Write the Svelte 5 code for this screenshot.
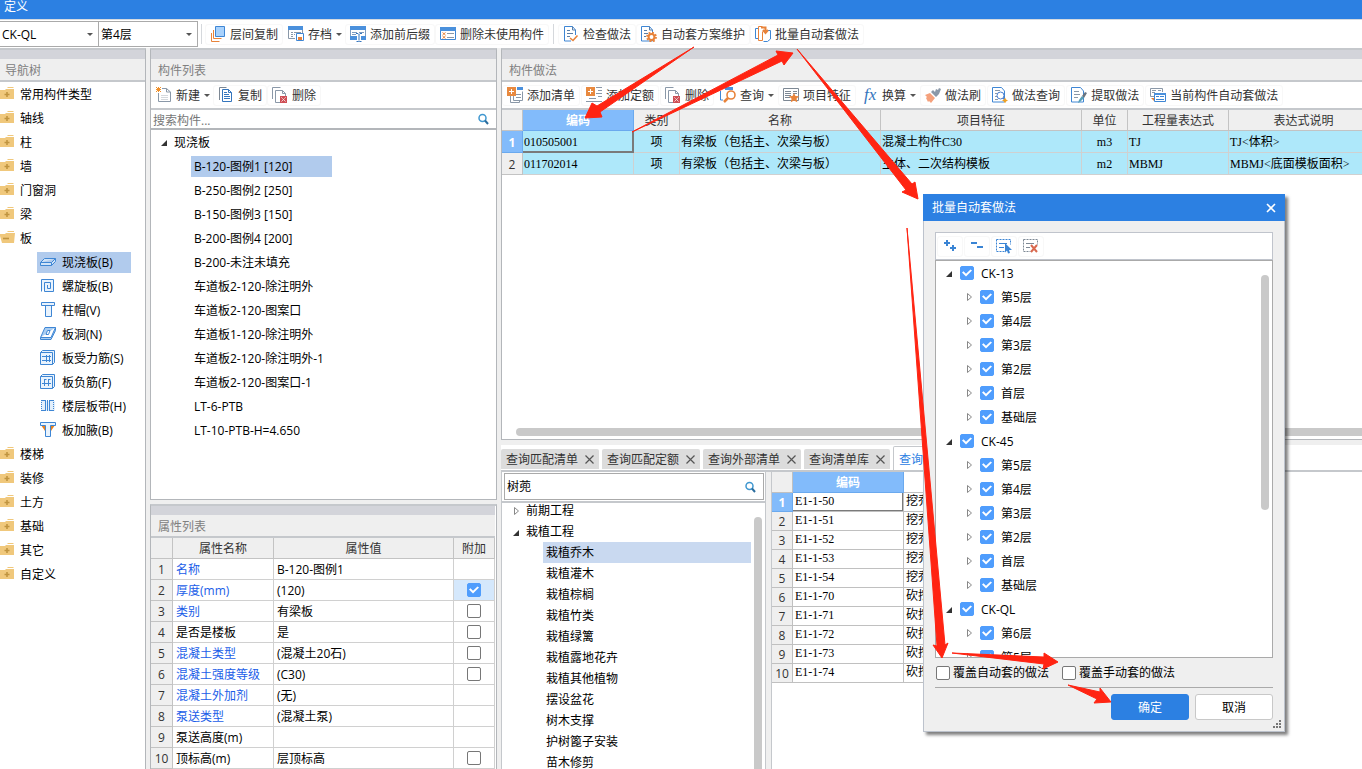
<script>
  const icons = {
    levelCopy:
      '<path fill="#a9d2fc" stroke="#3e86d4" d="M5.500.500h9v10h-9z"/><path fill="none" stroke="#e8833a" d="M3.500 4v8.500h8M1.500 7v8.500h8"/>',
    save:
      '<path fill="#4a90dc" d="M0 0h15v4H0z"/><path fill="none" stroke="#8a98a8" d="M.5 4v8.500H7M3 6.500h2m1 0h7M3 8.500h2m1 0h1M3 10.500h2M14.500 4v3"/><path fill="#fff" stroke="#3e86d4" d="M8.500 7.500h7v7h-7z"/><path fill="#e8833a" d="M10 11h4v3h-4z"/>',
    prefix:
      '<path fill="#4a90dc" d="M0 0h16v4H0z"/><path fill="none" stroke="#7d9cc0" d="M.5 4v6.500M15.500 4v6.500M2 6.500h5M9 6.500h5M2 8.500h4"/><path fill="#4a90dc" d="M0 10h7v4H0zM11 10h5v4h-5z"/><path fill="none" stroke="#3475bd" d="M6 7.500h2l1 1 1-1h2M9 8.500v6M6.500 15.500h2l.5-.5.5.5h2"/>',
    unused:
      '<path fill="#fff" stroke="#3e86d4" d="M.5 1.500h15v12H.5z"/><path fill="#4a90dc" d="M0 1h16v4H0z"/><path stroke="#e8833a" d="M2.500 6.500l3 2.500M5.500 6.500L2.500 9M2.500 10l3 2.500M5.500 10l-3 2.500"/><path stroke="#8a98a8" d="M7 7.500h7M7 11.500h7"/>',
    check:
      '<path fill="#fff" stroke="#3e86d4" d="M1.500.5h8l3 3.500v11h-11z"/><path fill="none" stroke="#5a7fa8" d="M9.500.5V4h3M4 4.500h3M4 7.500h6M4 10.500h3"/><path fill="#fff" d="M8 9h7v7H8z"/><path fill="none" stroke="#e8833a" stroke-width="1.600" d="M7 12l3 2.500 4.500-5"/>',
    plan:
      '<path fill="#fff" stroke="#3e86d4" d="M.5.500h8l3 3.500v11H.5z"/><path fill="none" stroke="#5a7fa8" d="M8.500.5V4h3M3 4.500h3M3 7.500h4M3 10.500h2"/><circle cx="10.500" cy="11" r="4.500" fill="none" stroke="#e8833a" stroke-width="1.800" stroke-dasharray="1.800 1.734"/><circle cx="10.500" cy="11" r="2.900" fill="#fff" stroke="#e8833a" stroke-width="2"/>',
    batch:
      '<path fill="none" stroke="#3e86d4" d="M3 2.500H.5v10H3M13 4.500h2.500v8.500l-3 2.500h-4"/><path fill="none" stroke="#e8833a" d="M7.500.5h-4v14h4v-9"/><path fill="none" stroke="#e8833a" stroke-width="2" d="M6 1.500h4.500V6M8 4l2.500 3L13 4"/>',
    add:
      '<path fill="none" stroke="#8a98a8" d="M3.500 9v6.500h9v-2M6.500 9v4.500h9v-9M9 7.500h5M9 10.500h5"/><path fill="#4a90dc" d="M10 0h6v3h-6z"/><path fill="#e8893f" d="M0 0h9v9H0z"/><path stroke="#fff" d="M4.500 2v5M2 4.500h5"/>',
    quota:
      '<path stroke="#8a98a8" d="M10 .5h6M12 3.500h4M10 6.500h6M12 9.500h4M3 11.500h7M0 14.500h16"/><path fill="#e8893f" d="M0 0h9v9H0z"/><path stroke="#fff" d="M4.500 2v5M2 4.500h5"/>',
    remove:
      '<path fill="#fff" stroke="#8a98a8" d="M.5 12V.500h8M3.500 3.500h7l3 3v9h-10z"/><path fill="none" stroke="#8a98a8" d="M10.500 3.500v3h3"/><path fill="#cf4f55" d="M8 9h7v7H8z"/><path stroke="#fff" stroke-dasharray="1.200 .5" d="M9.500 10.500l4 4M13.500 10.500l-4 4"/>',
    query:
      '<path fill="none" stroke="#3e86d4" d="M.5 4v9H3"/><path fill="#4a90dc" d="M5 0h8v3H5z"/><circle cx="11" cy="8" r="4" fill="#fff" stroke="#e8833a" stroke-width="1.600"/><path stroke="#e8833a" stroke-width="2.500" d="M8 11l-4 4"/>',
    feature:
      '<path fill="#fff" stroke="#7d8894" d="M.5 1.500h15v12H.5z"/><path stroke="#7d8894" d="M2 4.500h6M10 4.500h4M2 6.500h6M10 6.500h4M2 8.500h6M2 10.500h5"/><path fill="#e8833a" d="M11 6l1.500 3 3.500.3-2.500 2.400.8 3.500L11 13.400l-3.200 1.800.8-3.500L6 9.300 9.500 9z"/>',
    brush:
      '<path fill="#8a98a8" d="M14 1l2 1-2 5-3 3-5-5 2-2 2 2 1-3 2 1z"/><path fill="#f5a17c" d="M5 6l5 5-4 5-2-2-1 1-2-4 1-1-2-2z"/>',
    search:
      '<path fill="#fff" stroke="#3e86d4" d="M.5.500h9l3 3.500v11H.5z"/><path stroke="#8a98a8" d="M3 3.500h5M3 6.500h2M3 9.500h2M3 12.500h3"/><circle cx="8.500" cy="8.500" r="3.500" fill="#fff" stroke="#4a7fd0"/><path stroke="#4a7fd0" stroke-width="1.500" d="M11 11l2 2"/><path fill="#f0a020" d="M13 10.500l1 2 2 1-2 1-1 2-1-2-2-1 2-1z"/>',
    extract:
      '<path fill="#fff" stroke="#3e86d4" d="M.5.500h9l3 3.500v11H.5z"/><path stroke="#8a98a8" d="M3 4.500h5M3 7.500h6M3 10.500h4"/><path fill="#697480" d="M16 6l-2-1-3 4 2 2z"/><path fill="#58a0b8" d="M11 9l2 2-4 4-2 1 1-3z"/>',
    current:
      '<path fill="none" stroke="#8a98a8" d="M4 9.500H.5v-8h12V5M2 3.500h4M2 5.500h3M8 3.500h3"/><path fill="#e8833a" d="M1 11h3v3z"/><path fill="#fff" stroke="#3e86d4" d="M4.500 6.500h11v8h-11z"/><path stroke="#3e86d4" d="M6 9.500h3M10 9.500h4M6 12.500h8"/><path fill="#4a90dc" d="M4 6h12v2H4z"/>',
    create:
      '<path fill="#fff" stroke="#8a98a8" d="M2.500 1.500h8l4 3.500v9.500h-12z"/><path fill="none" stroke="#8a98a8" d="M10.500 1.500V5h4"/><path stroke="#d5d9dd" d="M5 8.500h7M5 10.500h7M5 12.500h7"/><path fill="#fff" d="M0 0h6v6H0z"/><path fill="#f0902a" d="M0 0h1v1H0zM2 0h1v1H2zM4 0h1v1H4zM1 1h3v3H1zM0 2h5v1H0zM0 4h1v1H0zM2 4h1v1H2zM4 4h1v1H4z"/>',
    copy:
      '<path fill="none" stroke="#7d8894" d="M1.500 13V.500h7"/><path fill="#fff" stroke="#3475bd" d="M4.500 2.500h6l3 3v9h-9z"/><path fill="none" stroke="#3475bd" d="M10.500 2.500v3h3M6 5.500h3M6 7.500h5M6 9.500h6M6 11.500h6"/>',
    slab:
      '<path fill="#cfe3f8" stroke="#3e86d4" d="M.5 8.500l4-4h11v3l-4 4H.5zM.5 8.500h11l4-4M11.500 8.500v3"/>',
    spiral:
      '<path fill="#e9f3fd" stroke="#3e86d4" d="M1.500 13.500v-12h12v12h-9v-9h6v6h-3V7"/>',
    cap:
      '<path fill="#e9f3fd" stroke="#3e86d4" d="M1.500.500h13v3h-3v11h-6v-11h-4zM5 3.500h7"/>',
    hole:
      '<path fill="#a9cdf2" stroke="#3e86d4" d="M.5 11.500L5 1.500h10.500L11 11.500zM.5 11.500v2H11l4.500-9v-3"/><path fill="#fff" stroke="#3e86d4" d="M6 8.500l1.500-4H10l-1.500 4z"/>',
    rebar:
      '<path fill="#e9f3fd" stroke="#3e86d4" d="M.5 2.500h12v12H.5zM.5 2.500l2-2h12v12l-2 2M2 6.500h9M2 10.500h9M6.500 5v7M9.500 5v7"/>',
    negative:
      '<path fill="#e9f3fd" stroke="#3e86d4" d="M.5 2.500h12v12H.5zM.5 2.500l2-2h12v12l-2 2M4.500 5v7M8.500 5v7M2 9.500h9M4.500 5.500h2M8.500 5.500h2"/>',
    strip:
      '<path fill="#e3effb" d="M1 3h14v10H1z"/><path stroke="#3e86d4" d="M1 2.500h5M9 2.500h5M1 12.500h5M9 12.500h5M5.500 3v10M9.500 3v10M7.500 2v11"/><path stroke="#3e86d4" stroke-dasharray="1 1" d="M1.500 4v8M13.500 4v8"/>',
    haunch:
      '<path fill="#e8801c" d="M1 3h14l-4 6H5z"/><path fill="#e9f3fd" stroke="#3e86d4" d="M.5.500h15v3h-5v11h-5v-11h-5z"/>',
    folder:
      '<path fill="#f0c87c" d="M8 1h5l1 1H7zM6 3h8v10H0V4h5z"/><path stroke="#c09440" stroke-width="1.600" d="M4.500 8.500h5M7 6v5"/>',
    folderOpen:
      '<path fill="#f0c87c" d="M8 1h6v1H7zM6 3h9l-1 10H2L0 6V4h5z"/><path stroke="#c09440" stroke-width="1.600" d="M3 8.500h6"/>',
    plus: '<path stroke="#3a84d4" stroke-width="2" d="M2 5h6M5 2v6M8 10h6M11 7v6"/>',
    minus: '<path stroke="#3a84d4" stroke-width="2" d="M2 5h6M8 9h6"/>',
    selectAll:
      '<path fill="none" stroke="#3a84d4" stroke-dasharray="2 1" d="M.5 1.500h14v5M.5 1.500v12h9"/><path stroke="#3a84d4" d="M3 5.500h8M3 9.500h5"/><path fill="#3a84d4" d="M9 5l7 7h-3l1 3-2 .500-1-3-2 2z"/>',
    selectNone:
      '<path fill="none" stroke="#7d8894" stroke-dasharray="2 1" d="M.5 1.500h14v5M.5 1.500v12h7"/><path stroke="#7d8894" d="M3 5.500h8M3 9.500h4"/><path stroke="#d9694f" stroke-width="2" d="M8 7l6 7M14 7l-6 7"/>',
    magnifier:
      '<circle cx="6.500" cy="7" r="3.500" fill="none" stroke="#3f97d0" stroke-width="1.500"/><path stroke="#2a6d9e" stroke-width="2" d="M9 9.500l3 3.500"/>'
  };

  const mainTools = [
    { icon: "levelCopy", text: "层间复制" },
    { icon: "save", text: "存档", menu: true },
    { icon: "prefix", text: "添加前后缀" },
    { icon: "unused", text: "删除未使用构件" },
    { separator: true },
    { icon: "check", text: "检查做法" },
    { icon: "plan", text: "自动套方案维护" },
    { icon: "batch", text: "批量自动套做法" }
  ];
  const listTools = [
    { icon: "create", text: "新建", menu: true },
    { icon: "copy", text: "复制" },
    { icon: "remove", text: "删除" }
  ];
  const methodTools = [
    { icon: "add", text: "添加清单" },
    { icon: "quota", text: "添加定额" },
    { icon: "remove", text: "删除" },
    { icon: "query", text: "查询", menu: true },
    { icon: "feature", text: "项目特征" },
    { icon: "fx", text: "换算", menu: true },
    { icon: "brush", text: "做法刷" },
    { icon: "search", text: "做法查询" },
    { icon: "extract", text: "提取做法" },
    { icon: "current", text: "当前构件自动套做法" }
  ];

  const slabTypes = [
    ["slab", "现浇板(B)"],
    ["spiral", "螺旋板(B)"],
    ["cap", "柱帽(V)"],
    ["hole", "板洞(N)"],
    ["rebar", "板受力筋(S)"],
    ["negative", "板负筋(F)"],
    ["strip", "楼层板带(H)"],
    ["haunch", "板加腋(B)"]
  ];
  const navigation = [
    "常用构件类型", "轴线", "柱", "墙", "门窗洞", "梁", "板",
    "楼梯", "装修", "土方", "基础", "其它", "自定义"
  ];

  const components = [
    "B-120-图例1 [120]",
    "B-250-图例2 [250]",
    "B-150-图例3 [150]",
    "B-200-图例4 [200]",
    "B-200-未注未填充",
    "车道板2-120-除注明外",
    "车道板2-120-图案口",
    "车道板1-120-除注明外",
    "车道板2-120-除注明外-1",
    "车道板2-120-图案口-1",
    "LT-6-PTB",
    "LT-10-PTB-H=4.650"
  ];

  let properties = $state([
    { name: "名称", value: "B-120-图例1", blue: true },
    { name: "厚度(mm)", value: "(120)", blue: true, extra: true },
    { name: "类别", value: "有梁板", blue: true, extra: false },
    { name: "是否是楼板", value: "是", extra: false },
    { name: "混凝土类型", value: "(混凝土20石)", blue: true, extra: false },
    { name: "混凝土强度等级", value: "(C30)", blue: true, extra: false },
    { name: "混凝土外加剂", value: "(无)", blue: true },
    { name: "泵送类型", value: "(混凝土泵)", blue: true },
    { name: "泵送高度(m)", value: "" },
    { name: "顶标高(m)", value: "层顶标高", extra: false }
  ]);

  const methodHeads = ["类别", "名称", "项目特征", "单位", "工程量表达式", "表达式说明"];
  const methods = [
    ["010505001", "项", "有梁板（包括主、次梁与板）", "混凝土构件C30", "m3", "TJ", "TJ<体积>"],
    ["011702014", "项", "有梁板（包括主、次梁与板）", "主体、二次结构模板", "m2", "MBMJ", "MBMJ<底面模板面积>"]
  ];

  const tabs = ["查询匹配清单", "查询匹配定额", "查询外部清单", "查询清单库"];
  const plantings = [
    "栽植乔木", "栽植灌木", "栽植棕榈", "栽植竹类", "栽植绿篱", "栽植露地花卉",
    "栽植其他植物", "摆设盆花", "树木支撑", "护树篦子安装", "苗木修剪"
  ];
  const quotas = [50, 51, 52, 53, 54, 70, 71, 72, 73, 74];

  const lowFloors = ["第5层", "第4层", "第3层", "第2层", "首层", "基础层"];
  const buildings = [
    { name: "CK-13", floors: lowFloors },
    { name: "CK-45", floors: lowFloors },
    { name: "CK-QL", floors: ["第6层", "第5层"] }
  ];

  let componentFilter = $state("");
  let quotaFilter = $state("树蔸");
  let coverAuto = $state(false);
  let coverManual = $state(false);
  let dialogOpen = $state(true);
</script>

{#snippet icon(name)}
  {#if name === "fx"}
    <i class="fx">fx</i>
  {:else}
    <svg class="icon" viewBox="0 0 16 16" aria-hidden="true">{@html icons[name]}</svg>
  {/if}
{/snippet}

{#snippet arrow(open)}
  <svg class="arrow" viewBox="0 0 8 8" aria-hidden="true">
    {#if open}
      <path fill="#333" d="M7 2v6H1z" />
    {:else}
      <path fill="#fff" stroke="#888" d="M2.500.500l4 3.500-4 3.500z" />
    {/if}
  </svg>
{/snippet}

{#snippet tools(items)}
  {#each items as item}
    {#if item.separator}
      <span class="separator"></span>
    {:else}
      <button class="tool" class:menu={item.menu} type="button">
        {@render icon(item.icon)}
        <span>{item.text}</span>
        {#if item.menu}<span class="caret"></span>{/if}
      </button>
    {/if}
  {/each}
{/snippet}

<div class="window">
  <header class="title">定义</header>

  <div class="main-bar">
    <div class="picker">
      <select aria-label="楼栋"><option>CK-QL</option></select>
      <span class="caret"></span>
    </div>
    <div class="picker">
      <select aria-label="楼层"><option>第4层</option></select>
      <span class="caret"></span>
    </div>
    <span class="separator"></span>
    {@render tools(mainTools)}
  </div>

  <main>
    <section class="panel nav">
      <h2>导航树</h2>
      <ul class="tree">
        {#each navigation as item}
          <li class="row">
            {@render icon(item === "板" ? "folderOpen" : "folder")}
            <span>{item}</span>
          </li>
          {#if item === "板"}
            {#each slabTypes as [symbol, text], i}
              <li class="row child">
                <span class="entry" class:selected={i === 0}>
                  {@render icon(symbol)}
                  {text}
                </span>
              </li>
            {/each}
          {/if}
        {/each}
      </ul>
    </section>

    <div class="middle">
      <section class="panel components">
        <h2>构件列表</h2>
        <div class="bar">{@render tools(listTools)}</div>
        <label class="filter">
          <input bind:value={componentFilter} placeholder="搜索构件..." aria-label="搜索构件" />
          {@render icon("magnifier")}
        </label>
        <ul class="tree">
          <li class="row root">{@render arrow(true)}现浇板</li>
          {#each components as item, i}
            <li class="row leaf"><span class:selected={i === 0}>{item}</span></li>
          {/each}
        </ul>
      </section>

      <section class="panel properties">
        <h2>属性列表</h2>
        <table>
          <colgroup>
            <col class="w-no" /><col class="w-name" /><col /><col class="w-extra" />
          </colgroup>
          <thead>
            <tr><th></th><th>属性名称</th><th>属性值</th><th>附加</th></tr>
          </thead>
          <tbody>
            {#each properties as property, i}
              <tr>
                <th>{i + 1}</th>
                <td class:blue={property.blue}>{property.name}</td>
                <td>{property.value}</td>
                <td class="extra" class:on={property.extra}>
                  {#if property.extra !== undefined}
                    <input type="checkbox" bind:checked={property.extra} aria-label={property.name} />
                  {/if}
                </td>
              </tr>
            {/each}
          </tbody>
        </table>
      </section>
    </div>

    <div class="right">
      <section class="panel methods">
        <h2>构件做法</h2>
        <div class="bar spaced">{@render tools(methodTools)}</div>
        <div class="grid-area">
          <table class="song">
            <colgroup>
              <col class="m-no" /><col class="m-code" /><col class="m-small" /><col class="m-wide" />
              <col class="m-wide" /><col class="m-small" /><col class="m-expr" /><col class="m-note" />
            </colgroup>
            <thead>
              <tr>
                <th></th>
                <th class="active">编码</th>
                {#each methodHeads as head}<th>{head}</th>{/each}
              </tr>
            </thead>
            <tbody>
              {#each methods as row, i}
                <tr>
                  <th class:active={i === 0}>{i + 1}</th>
                  {#each row as cell, j}
                    <td class:center={j === 1 || j === 4} class:current={i === 0 && j === 0}>{cell}</td>
                  {/each}
                </tr>
              {/each}
            </tbody>
          </table>
        </div>
        <div class="h-scroll"><span></span></div>
      </section>

      <section class="lookup">
        <nav class="tabs">
          {#each tabs as tab}
            <button type="button" class="tab">
              {tab}
              <svg viewBox="0 0 9 9" aria-hidden="true"><path stroke="#555" stroke-width="1.200" d="M.5.500l8 8M8.500.500l-8 8" /></svg>
            </button>
          {/each}
          <button type="button" class="tab open">查询定额库</button>
        </nav>
        <div class="lookup-body">
          <div class="catalog">
            <label class="filter boxed">
              <input bind:value={quotaFilter} aria-label="查询定额" />
              {@render icon("magnifier")}
            </label>
            <div class="catalog-list">
              <ul>
                <li class="group">{@render arrow(false)}前期工程</li>
                <li class="group">{@render arrow(true)}栽植工程</li>
                {#each plantings as item, i}
                  <li class="item" class:picked={i === 0}>{item}</li>
                {/each}
              </ul>
              <span class="v-scroll"></span>
            </div>
          </div>
          <div class="quota-area">
            <table class="song quotas">
              <colgroup><col class="m-no" /><col class="m-code" /><col class="m-wide" /></colgroup>
              <thead><tr><th></th><th class="active">编码</th><td></td></tr></thead>
              <tbody>
                {#each quotas as code, i}
                  <tr>
                    <th class:active={i === 0}>{i + 1}</th>
                    <td class:current={i === 0}>E1-1-{code}</td>
                    <td>{i < 5 ? "挖乔" : "砍挖"}</td>
                  </tr>
                {/each}
              </tbody>
            </table>
          </div>
        </div>
      </section>
    </div>
  </main>

  {#if dialogOpen}
    <div class="dialog" role="dialog" aria-labelledby="dialog-title">
      <header>
        <span id="dialog-title">批量自动套做法</span>
        <button type="button" aria-label="关闭" onclick={() => (dialogOpen = false)}>
          <svg viewBox="0 0 10 10" aria-hidden="true"><path stroke="#fff" stroke-width="1.600" d="M1 1l8 8M9 1L1 9" /></svg>
        </button>
      </header>
      <div class="dialog-body">
        <div class="dialog-tools">
          <button class="tool" type="button" aria-label="全部展开">{@render icon("plus")}</button>
          <button class="tool" type="button" aria-label="全部折叠">{@render icon("minus")}</button>
          <button class="tool" type="button" aria-label="全选">{@render icon("selectAll")}</button>
          <button class="tool" type="button" aria-label="全不选">{@render icon("selectNone")}</button>
        </div>
        <div class="floors">
          <ul>
            {#each buildings as building}
              <li class="row">
                {@render arrow(true)}
                <label><input type="checkbox" checked />{building.name}</label>
              </li>
              {#each building.floors as floor}
                <li class="row floor">
                  {@render arrow(false)}
                  <label><input type="checkbox" checked />{floor}</label>
                </li>
              {/each}
            {/each}
          </ul>
          <span class="v-scroll"></span>
        </div>
        <div class="options">
          <label><input type="checkbox" bind:checked={coverAuto} />覆盖自动套的做法</label>
          <label><input type="checkbox" bind:checked={coverManual} />覆盖手动套的做法</label>
        </div>
        <footer>
          <button type="button" class="primary">确定</button>
          <button type="button" onclick={() => (dialogOpen = false)}>取消</button>
        </footer>
      </div>
      <svg class="grip" viewBox="0 0 9 9" aria-hidden="true">
        <path fill="#777" d="M6 0h2v2H6zM3 3h2v2H3zM6 3h2v2H6zM0 6h2v2H0zM3 6h2v2H3zM6 6h2v2H6z" />
      </svg>
    </div>
  {/if}

  <svg class="marks" width="1362" height="769" viewBox="0 0 1362 769" aria-hidden="true">
    <path d="M694 47L597 106l-5-3-7 15 17-1-2-5z" />
    <path d="M632 132L778 55l-2-4 17 2-9 12-2-4z" />
    <path d="M797 49L906 190l-4 2 16 7-3-17-3 2z" />
    <path d="M907 228l30 418-4-1 9 13 6-15-3 2z" />
    <path d="M952 653l92 11-1 5 15-7-14-9v4z" />
    <path d="M1068 685l29 14-3 4 17-1-11-14v4z" />
  </svg>
</div>

<style>
  :global(body) {
    overflow: hidden;
  }
  .window {
    position: relative;
    display: flex;
    flex-direction: column;
    height: 100vh;
    overflow: hidden;
    background: #efefef;
    color: #000;
    font-family: "Open Sans", "Noto Sans CJK SC", sans-serif;
    font-size: 12px;
    line-height: 21px;
  }
  ul {
    margin: 0;
    padding: 0;
    list-style: none;
  }
  button,
  input,
  select {
    font: inherit;
    color: inherit;
  }
  .title {
    flex: none;
    box-sizing: border-box;
    height: 19px;
    padding-left: 4px;
    background: #2c80e2;
    color: #fff;
    line-height: 13px;
  }
  .icon {
    flex: none;
    width: 16px;
    height: 16px;
  }
  .fx {
    width: 16px;
    color: #3475bd;
    font-family: "Liberation Serif", serif;
    font-size: 17px;
    line-height: 18px;
  }
  .arrow {
    flex: none;
    width: 8px;
    height: 8px;
  }

  .main-bar {
    display: flex;
    flex: none;
    align-items: center;
    box-sizing: border-box;
    height: 29px;
    border-top: 1px solid #d5dae0;
    background: #fff;
    color: #333;
  }
  .picker {
    display: grid;
    align-items: center;
    box-sizing: border-box;
    width: 99px;
    height: 26px;
    border: 1px solid #aaa;
    border-left: 0;
    color: #000;
  }
  .picker select,
  .picker .caret {
    grid-area: 1 / 1;
  }
  .picker select {
    width: 100%;
    height: 24px;
    padding: 1px 2px 0;
    border: 0;
    background: none;
    appearance: none;
  }
  .picker .caret {
    justify-self: end;
    margin-right: 5px;
    pointer-events: none;
  }
  .caret {
    width: 0;
    border: 3px solid transparent;
    border-top-color: #555;
    border-bottom: 0;
  }
  .separator {
    width: 1px;
    height: 20px;
    margin: 0 3px;
    background: #d5d8dc;
  }
  .tool + .separator {
    margin: 0 4px;
  }
  .tool {
    display: flex;
    flex: none;
    align-items: center;
    gap: 4px;
    height: 21px;
    padding: 0 4px;
    border: 1px solid #f8f8f8;
    border-radius: 3px;
    background: none;
    white-space: nowrap;
  }
  .tool.menu {
    padding-right: 2px;
    border-color: transparent;
  }

  main {
    display: grid;
    flex: 1;
    grid-template-columns: 146px 347px minmax(0, 1fr);
    gap: 4px;
    min-height: 0;
  }
  main > * {
    min-height: 0;
  }
  .panel {
    display: flex;
    flex-direction: column;
    box-sizing: border-box;
    min-height: 0;
    border: 1px solid #b3b6ba;
    border-top: 2px solid #c5c8cc;
    background: #fff;
  }
  h2 {
    flex: none;
    height: 21px;
    margin: 0;
    padding-left: 7px;
    border-top: 9px solid #d3d4da;
    border-bottom: 2px solid #c5c8cc;
    background: #efefef;
    color: #808080;
    font-size: 12px;
    font-weight: normal;
    line-height: 23px;
  }
  .nav {
    border-left: 0;
    border-bottom: 0;
  }
  .nav h2 {
    padding-left: 5px;
  }
  .tree {
    overflow: hidden;
  }
  .row {
    display: flex;
    align-items: center;
    height: 24px;
    white-space: nowrap;
  }
  .nav .row {
    gap: 4px;
  }
  .nav .child {
    padding-left: 37px;
  }
  .entry {
    display: flex;
    align-items: center;
    gap: 6px;
    box-sizing: border-box;
    min-width: 94px;
    padding-left: 3px;
  }
  .selected {
    background: #b1cbed;
  }

  .middle {
    display: flex;
    flex-direction: column;
    gap: 4px;
  }
  .components {
    flex: 1;
  }
  .bar {
    display: flex;
    flex: none;
    align-items: center;
    height: 26px;
    border-bottom: 2px solid #c5c8cc;
    color: #333;
    overflow: hidden;
  }
  .spaced {
    gap: 1px;
  }
  .filter {
    display: flex;
    flex: none;
    align-items: center;
    height: 18px;
    padding-right: 4px;
    border-bottom: 2px solid #b3b6ba;
  }
  .filter input {
    flex: 1;
    box-sizing: border-box;
    min-width: 0;
    height: 18px;
    padding: 2px 2px 0;
    border: 0;
    outline: 0;
    background: none;
  }
  .filter input::placeholder {
    color: #777;
  }
  .root {
    gap: 6px;
    padding-left: 9px;
  }
  .leaf {
    padding-left: 40px;
  }
  .leaf span {
    min-width: 135px;
    padding: 0 3px;
  }

  table {
    width: 100%;
    border-spacing: 0;
    table-layout: fixed;
    line-height: 18px;
  }
  th,
  td {
    box-sizing: border-box;
    height: 21px;
    padding: 2px 0 0;
    border-right: 1px solid #d0d0d0;
    border-bottom: 1px solid #d0d0d0;
    overflow: hidden;
    white-space: nowrap;
  }
  th {
    border-color: #c3c3c3;
    background: #efefef;
    color: #333;
    font-weight: normal;
  }
  td {
    padding-left: 3px;
  }
  .properties {
    flex: none;
    padding-right: 1px;
    border-bottom: 0;
  }
  .w-no {
    width: 22px;
  }
  .w-name {
    width: 101px;
  }
  .w-extra {
    width: 41px;
  }
  .blue {
    color: #1a5de8;
  }
  .extra {
    padding: 0;
    line-height: 0;
    text-align: center;
  }
  .extra.on {
    background: #d5e8fc;
  }
  input[type="checkbox"] {
    display: inline-grid;
    flex: none;
    place-content: center;
    box-sizing: border-box;
    width: 14px;
    height: 14px;
    margin: 0;
    border: 1px solid #777;
    border-radius: 2px;
    background: #fff;
    appearance: none;
  }
  input[type="checkbox"]:checked {
    border-color: #4f9dfd;
    background: #4f9dfd;
  }
  input[type="checkbox"]:checked::before {
    width: 10px;
    height: 8px;
    background: #fff;
    clip-path: polygon(0 45%, 15% 28%, 40% 60%, 85% 5%, 100% 20%, 40% 95%);
    content: "";
  }

  .right {
    display: grid;
    grid-template-rows: minmax(0, 1fr) 324px;
    gap: 5px;
    min-width: 0;
  }
  .methods {
    min-width: 0;
    border-right: 0;
  }
  .grid-area {
    flex: 1;
    overflow: hidden;
  }
  .song {
    font-family: "Liberation Serif", "Noto Sans CJK SC", serif;
  }
  .song th {
    font-family: "Open Sans", "Noto Sans CJK SC", sans-serif;
  }
  .methods table {
    width: 877px;
  }
  .methods td {
    height: 22px;
    padding: 0 0 0 1px;
    background: #aee8fa;
  }
  .m-no {
    width: 21px;
  }
  .m-code {
    width: 111px;
  }
  .m-small {
    width: 46px;
  }
  .m-wide {
    width: 201px;
  }
  .m-expr {
    width: 101px;
  }
  .m-note {
    width: 150px;
  }
  .song .active {
    border-color: #6aa9ee;
    background: #82bbfb;
    color: #fff;
    font-weight: bold;
  }
  td.current {
    box-shadow: inset -1px -1px #7a7a7a;
    border-color: #7a7a7a;
  }
  .methods .center {
    padding: 0;
    text-align: center;
  }
  .h-scroll {
    flex: none;
    padding: 0 0 3px 14px;
  }
  .h-scroll span {
    display: block;
    height: 8px;
    border-radius: 4px 0 0 4px;
    background: #c9c9c9;
  }

  .lookup {
    display: flex;
    flex-direction: column;
    min-width: 0;
    min-height: 0;
    background: #fff;
  }
  .tabs {
    display: flex;
    flex: none;
    align-items: flex-end;
    gap: 3px;
    height: 25px;
    border-bottom: 2px solid #c5c8cc;
  }
  .tab {
    display: flex;
    align-items: center;
    gap: 7px;
    box-sizing: border-box;
    height: 20px;
    margin-bottom: 1px;
    padding: 1px 5px 0;
    border: 0;
    border-radius: 2px 2px 0 0;
    background: #dcdcdc;
    color: #333;
    white-space: nowrap;
  }
  .tab svg {
    width: 9px;
    height: 9px;
  }
  .tab.open {
    height: 24px;
    margin-bottom: 0;
    border: 1px solid #c5c8cc;
    border-bottom: 0;
    background: #fff;
    color: #2c80e2;
  }
  .lookup-body {
    display: grid;
    flex: 1;
    grid-template-columns: 265px minmax(0, 1fr);
    gap: 5px;
    min-height: 0;
    background: #efefef;
  }
  .catalog {
    display: flex;
    flex-direction: column;
    min-height: 0;
    border-right: 1px solid #c5c8cc;
    border-left: 1px solid #c5c8cc;
    background: #fff;
  }
  .boxed {
    height: 25px;
    margin: 1px 1px 1px 2px;
    border: 1px solid #aaa;
  }
  .boxed input {
    padding-top: 0;
  }
  .catalog-list {
    display: flex;
    flex: 1;
    justify-content: space-between;
    min-height: 0;
    border-top: 2px solid #c5c8cc;
    overflow: hidden;
  }
  .catalog-list li {
    white-space: nowrap;
  }
  .catalog-list ul {
    flex: 1;
    margin-top: -3px;
  }
  .group {
    display: flex;
    align-items: center;
    gap: 6px;
    padding-left: 10px;
  }
  .item {
    margin: 0 3px 0 41px;
    padding-left: 3px;
  }
  .picked {
    background: #c9d9f0;
  }
  .v-scroll {
    flex: none;
    width: 8px;
    margin: 14px 3px 0 0;
    border-radius: 4px 4px 0 0;
    background: #c9c9c9;
  }
  .quota-area {
    border-left: 1px solid #c5c8cc;
    background: #fff;
    overflow: hidden;
  }
  .quotas {
    width: 333px;
    line-height: 16px;
  }
  .quotas th,
  .quotas td {
    height: 19px;
    border-color: #c0c0c0;
  }
  .quotas td {
    padding: 0 0 0 2px;
    vertical-align: top;
  }
  .quotas thead th,
  .quotas thead td {
    height: 21px;
  }

  .dialog {
    position: absolute;
    top: 194px;
    left: 923px;
    width: 362px;
    background: #efefef;
    box-shadow: 3px 3px 3px rgba(0, 0, 0, 0.5);
  }
  .dialog header {
    display: flex;
    align-items: center;
    justify-content: space-between;
    height: 27px;
    padding: 0 9px;
    background: #2c80e2;
    color: #fff;
  }
  .dialog header button {
    display: flex;
    padding: 0;
    border: 0;
    background: none;
  }
  .dialog header svg {
    width: 10px;
    height: 10px;
  }
  .dialog-body {
    padding: 11px;
    border: 1px solid #bcc2cc;
    border-top: 0;
  }
  .dialog-tools {
    display: flex;
    align-items: center;
    gap: 1px;
    height: 26px;
    padding-left: 1px;
    border: 1px solid #c0c4cc;
    background: #fff;
  }
  .floors {
    display: flex;
    justify-content: space-between;
    height: 396px;
    border: 1px solid #aaa;
    background: #fff;
    overflow: hidden;
  }
  .floors .row {
    gap: 7px;
    padding-left: 9px;
  }
  .floors .floor {
    padding-left: 29px;
  }
  .floors label {
    display: flex;
    align-items: center;
    gap: 7px;
  }
  .floors .v-scroll {
    height: 235px;
    border-radius: 4px;
  }
  .options {
    display: flex;
    gap: 13px;
    padding: 4px 1px;
    border-bottom: 1px solid #aaa;
  }
  .options label {
    display: flex;
    align-items: center;
    gap: 3px;
  }
  .dialog footer {
    display: flex;
    justify-content: flex-end;
    gap: 6px;
    padding-top: 6px;
  }
  .dialog footer button {
    width: 78px;
    height: 26px;
    padding: 1px 0 0;
    border: 1px solid #c8c8c8;
    border-radius: 3px;
    background: #fff;
  }
  .dialog footer .primary {
    border-color: #2c80e2;
    background: #2c80e2;
    color: #fff;
  }
  .grip {
    position: absolute;
    right: 3px;
    bottom: 3px;
    width: 9px;
    height: 9px;
  }
  .marks {
    position: absolute;
    top: 0;
    left: 0;
    fill: #ff2412;
    stroke: #ff2412;
    pointer-events: none;
  }
</style>
